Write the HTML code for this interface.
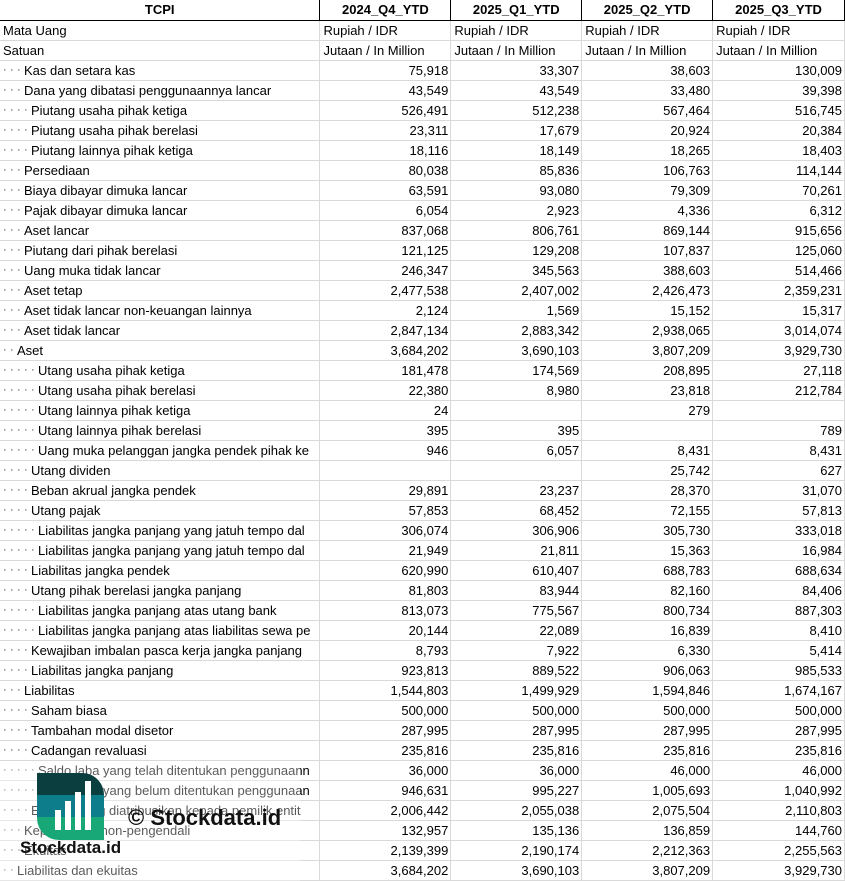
<!DOCTYPE html>
<html><head><meta charset="utf-8"><style>
body{margin:0;background:#fff;width:845px;height:881px;overflow:hidden;position:relative;font-family:"Liberation Sans",sans-serif;font-size:13px;color:#000}
table{border-collapse:collapse;table-layout:fixed;position:absolute;left:0;top:0}
tr{height:20px}
td{height:19px;max-height:19px;padding:0 3px;border-right:1px solid #d9d9d9;border-bottom:1px solid #d9d9d9;white-space:nowrap;overflow:hidden;line-height:19px;vertical-align:top;box-sizing:content-box}
td.n{text-align:right;padding-right:2px}
tr.h td{font-weight:bold;text-align:center;border-right:1px solid #000;border-bottom:1px solid #000}
.d{display:inline-block;vertical-align:top;line-height:19px;height:19px;font-size:11px;color:#333}
.d i{display:inline-block;width:7px;text-align:left;font-style:normal;vertical-align:top}
.fade{position:absolute;left:0;top:761px;width:300px;height:120px;background:rgba(255,255,255,0.35)}
</style></head><body>
<table>
<colgroup><col style="width:320px"><col style="width:131px"><col style="width:131px"><col style="width:131px"><col style="width:132px"></colgroup>
<tr class="h"><td>TCPI</td><td>2024_Q4_YTD</td><td>2025_Q1_YTD</td><td>2025_Q2_YTD</td><td>2025_Q3_YTD</td></tr>
<tr><td>Mata Uang</td><td>Rupiah / IDR</td><td>Rupiah / IDR</td><td>Rupiah / IDR</td><td>Rupiah / IDR</td></tr>
<tr><td>Satuan</td><td>Jutaan / In Million</td><td>Jutaan / In Million</td><td>Jutaan / In Million</td><td>Jutaan / In Million</td></tr>
<tr><td><span class="d"><i>·</i><i>·</i><i>·</i></span>Kas dan setara kas</td><td class="n">75,918</td><td class="n">33,307</td><td class="n">38,603</td><td class="n">130,009</td></tr>
<tr><td><span class="d"><i>·</i><i>·</i><i>·</i></span>Dana yang dibatasi penggunaannya lancar</td><td class="n">43,549</td><td class="n">43,549</td><td class="n">33,480</td><td class="n">39,398</td></tr>
<tr><td><span class="d"><i>·</i><i>·</i><i>·</i><i>·</i></span>Piutang usaha pihak ketiga</td><td class="n">526,491</td><td class="n">512,238</td><td class="n">567,464</td><td class="n">516,745</td></tr>
<tr><td><span class="d"><i>·</i><i>·</i><i>·</i><i>·</i></span>Piutang usaha pihak berelasi</td><td class="n">23,311</td><td class="n">17,679</td><td class="n">20,924</td><td class="n">20,384</td></tr>
<tr><td><span class="d"><i>·</i><i>·</i><i>·</i><i>·</i></span>Piutang lainnya pihak ketiga</td><td class="n">18,116</td><td class="n">18,149</td><td class="n">18,265</td><td class="n">18,403</td></tr>
<tr><td><span class="d"><i>·</i><i>·</i><i>·</i></span>Persediaan</td><td class="n">80,038</td><td class="n">85,836</td><td class="n">106,763</td><td class="n">114,144</td></tr>
<tr><td><span class="d"><i>·</i><i>·</i><i>·</i></span>Biaya dibayar dimuka lancar</td><td class="n">63,591</td><td class="n">93,080</td><td class="n">79,309</td><td class="n">70,261</td></tr>
<tr><td><span class="d"><i>·</i><i>·</i><i>·</i></span>Pajak dibayar dimuka lancar</td><td class="n">6,054</td><td class="n">2,923</td><td class="n">4,336</td><td class="n">6,312</td></tr>
<tr><td><span class="d"><i>·</i><i>·</i><i>·</i></span>Aset lancar</td><td class="n">837,068</td><td class="n">806,761</td><td class="n">869,144</td><td class="n">915,656</td></tr>
<tr><td><span class="d"><i>·</i><i>·</i><i>·</i></span>Piutang dari pihak berelasi</td><td class="n">121,125</td><td class="n">129,208</td><td class="n">107,837</td><td class="n">125,060</td></tr>
<tr><td><span class="d"><i>·</i><i>·</i><i>·</i></span>Uang muka tidak lancar</td><td class="n">246,347</td><td class="n">345,563</td><td class="n">388,603</td><td class="n">514,466</td></tr>
<tr><td><span class="d"><i>·</i><i>·</i><i>·</i></span>Aset tetap</td><td class="n">2,477,538</td><td class="n">2,407,002</td><td class="n">2,426,473</td><td class="n">2,359,231</td></tr>
<tr><td><span class="d"><i>·</i><i>·</i><i>·</i></span>Aset tidak lancar non-keuangan lainnya</td><td class="n">2,124</td><td class="n">1,569</td><td class="n">15,152</td><td class="n">15,317</td></tr>
<tr><td><span class="d"><i>·</i><i>·</i><i>·</i></span>Aset tidak lancar</td><td class="n">2,847,134</td><td class="n">2,883,342</td><td class="n">2,938,065</td><td class="n">3,014,074</td></tr>
<tr><td><span class="d"><i>·</i><i>·</i></span>Aset</td><td class="n">3,684,202</td><td class="n">3,690,103</td><td class="n">3,807,209</td><td class="n">3,929,730</td></tr>
<tr><td><span class="d"><i>·</i><i>·</i><i>·</i><i>·</i><i>·</i></span>Utang usaha pihak ketiga</td><td class="n">181,478</td><td class="n">174,569</td><td class="n">208,895</td><td class="n">27,118</td></tr>
<tr><td><span class="d"><i>·</i><i>·</i><i>·</i><i>·</i><i>·</i></span>Utang usaha pihak berelasi</td><td class="n">22,380</td><td class="n">8,980</td><td class="n">23,818</td><td class="n">212,784</td></tr>
<tr><td><span class="d"><i>·</i><i>·</i><i>·</i><i>·</i><i>·</i></span>Utang lainnya pihak ketiga</td><td class="n">24</td><td class="n"></td><td class="n">279</td><td class="n"></td></tr>
<tr><td><span class="d"><i>·</i><i>·</i><i>·</i><i>·</i><i>·</i></span>Utang lainnya pihak berelasi</td><td class="n">395</td><td class="n">395</td><td class="n"></td><td class="n">789</td></tr>
<tr><td><span class="d"><i>·</i><i>·</i><i>·</i><i>·</i><i>·</i></span>Uang muka pelanggan jangka pendek pihak ke</td><td class="n">946</td><td class="n">6,057</td><td class="n">8,431</td><td class="n">8,431</td></tr>
<tr><td><span class="d"><i>·</i><i>·</i><i>·</i><i>·</i></span>Utang dividen</td><td class="n"></td><td class="n"></td><td class="n">25,742</td><td class="n">627</td></tr>
<tr><td><span class="d"><i>·</i><i>·</i><i>·</i><i>·</i></span>Beban akrual jangka pendek</td><td class="n">29,891</td><td class="n">23,237</td><td class="n">28,370</td><td class="n">31,070</td></tr>
<tr><td><span class="d"><i>·</i><i>·</i><i>·</i><i>·</i></span>Utang pajak</td><td class="n">57,853</td><td class="n">68,452</td><td class="n">72,155</td><td class="n">57,813</td></tr>
<tr><td><span class="d"><i>·</i><i>·</i><i>·</i><i>·</i><i>·</i></span>Liabilitas jangka panjang yang jatuh tempo dal</td><td class="n">306,074</td><td class="n">306,906</td><td class="n">305,730</td><td class="n">333,018</td></tr>
<tr><td><span class="d"><i>·</i><i>·</i><i>·</i><i>·</i><i>·</i></span>Liabilitas jangka panjang yang jatuh tempo dal</td><td class="n">21,949</td><td class="n">21,811</td><td class="n">15,363</td><td class="n">16,984</td></tr>
<tr><td><span class="d"><i>·</i><i>·</i><i>·</i><i>·</i></span>Liabilitas jangka pendek</td><td class="n">620,990</td><td class="n">610,407</td><td class="n">688,783</td><td class="n">688,634</td></tr>
<tr><td><span class="d"><i>·</i><i>·</i><i>·</i><i>·</i></span>Utang pihak berelasi jangka panjang</td><td class="n">81,803</td><td class="n">83,944</td><td class="n">82,160</td><td class="n">84,406</td></tr>
<tr><td><span class="d"><i>·</i><i>·</i><i>·</i><i>·</i><i>·</i></span>Liabilitas jangka panjang atas utang bank</td><td class="n">813,073</td><td class="n">775,567</td><td class="n">800,734</td><td class="n">887,303</td></tr>
<tr><td><span class="d"><i>·</i><i>·</i><i>·</i><i>·</i><i>·</i></span>Liabilitas jangka panjang atas liabilitas sewa pe</td><td class="n">20,144</td><td class="n">22,089</td><td class="n">16,839</td><td class="n">8,410</td></tr>
<tr><td><span class="d"><i>·</i><i>·</i><i>·</i><i>·</i></span>Kewajiban imbalan pasca kerja jangka panjang</td><td class="n">8,793</td><td class="n">7,922</td><td class="n">6,330</td><td class="n">5,414</td></tr>
<tr><td><span class="d"><i>·</i><i>·</i><i>·</i><i>·</i></span>Liabilitas jangka panjang</td><td class="n">923,813</td><td class="n">889,522</td><td class="n">906,063</td><td class="n">985,533</td></tr>
<tr><td><span class="d"><i>·</i><i>·</i><i>·</i></span>Liabilitas</td><td class="n">1,544,803</td><td class="n">1,499,929</td><td class="n">1,594,846</td><td class="n">1,674,167</td></tr>
<tr><td><span class="d"><i>·</i><i>·</i><i>·</i><i>·</i></span>Saham biasa</td><td class="n">500,000</td><td class="n">500,000</td><td class="n">500,000</td><td class="n">500,000</td></tr>
<tr><td><span class="d"><i>·</i><i>·</i><i>·</i><i>·</i></span>Tambahan modal disetor</td><td class="n">287,995</td><td class="n">287,995</td><td class="n">287,995</td><td class="n">287,995</td></tr>
<tr><td><span class="d"><i>·</i><i>·</i><i>·</i><i>·</i></span>Cadangan revaluasi</td><td class="n">235,816</td><td class="n">235,816</td><td class="n">235,816</td><td class="n">235,816</td></tr>
<tr><td><span class="d"><i>·</i><i>·</i><i>·</i><i>·</i><i>·</i></span>Saldo laba yang telah ditentukan penggunaann</td><td class="n">36,000</td><td class="n">36,000</td><td class="n">46,000</td><td class="n">46,000</td></tr>
<tr><td><span class="d"><i>·</i><i>·</i><i>·</i><i>·</i><i>·</i></span>Saldo laba yang belum ditentukan penggunaan</td><td class="n">946,631</td><td class="n">995,227</td><td class="n">1,005,693</td><td class="n">1,040,992</td></tr>
<tr><td><span class="d"><i>·</i><i>·</i><i>·</i><i>·</i></span>Ekuitas yang diatribusikan kepada pemilik entit</td><td class="n">2,006,442</td><td class="n">2,055,038</td><td class="n">2,075,504</td><td class="n">2,110,803</td></tr>
<tr><td><span class="d"><i>·</i><i>·</i><i>·</i></span>Kepentingan non-pengendali</td><td class="n">132,957</td><td class="n">135,136</td><td class="n">136,859</td><td class="n">144,760</td></tr>
<tr><td><span class="d"><i>·</i><i>·</i><i>·</i></span>Ekuitas</td><td class="n">2,139,399</td><td class="n">2,190,174</td><td class="n">2,212,363</td><td class="n">2,255,563</td></tr>
<tr><td><span class="d"><i>·</i><i>·</i></span>Liabilitas dan ekuitas</td><td class="n">3,684,202</td><td class="n">3,690,103</td><td class="n">3,807,209</td><td class="n">3,929,730</td></tr>
</table>
<div class="fade"></div>
<svg style="position:absolute;left:37px;top:773px" width="67" height="67" viewBox="0 0 67 67">
<defs><clipPath id="c"><path d="M0 0 H45 A22 22 0 0 1 67 22 V67 H22 A22 22 0 0 1 0 45 Z"/></clipPath></defs>
<g clip-path="url(#c)">
<rect x="0" y="0" width="67" height="22" fill="#0b3f3f"/>
<rect x="0" y="22" width="67" height="22" fill="#0d7d8c"/>
<rect x="0" y="44" width="67" height="23" fill="#18a878"/>
</g>
<rect x="18" y="37" width="6" height="20" fill="#fff"/>
<rect x="28" y="28" width="6" height="29" fill="#fff"/>
<rect x="38" y="19" width="6" height="38" fill="#fff"/>
<rect x="48" y="8" width="6" height="49" fill="#fff"/>
</svg>
<div style="position:absolute;left:128px;top:805px;font-weight:bold;font-size:22px;color:#111">© Stockdata.id</div>
<div style="position:absolute;left:20px;top:838px;font-weight:bold;font-size:17px;color:#111">Stockdata.id</div>
</body></html>
